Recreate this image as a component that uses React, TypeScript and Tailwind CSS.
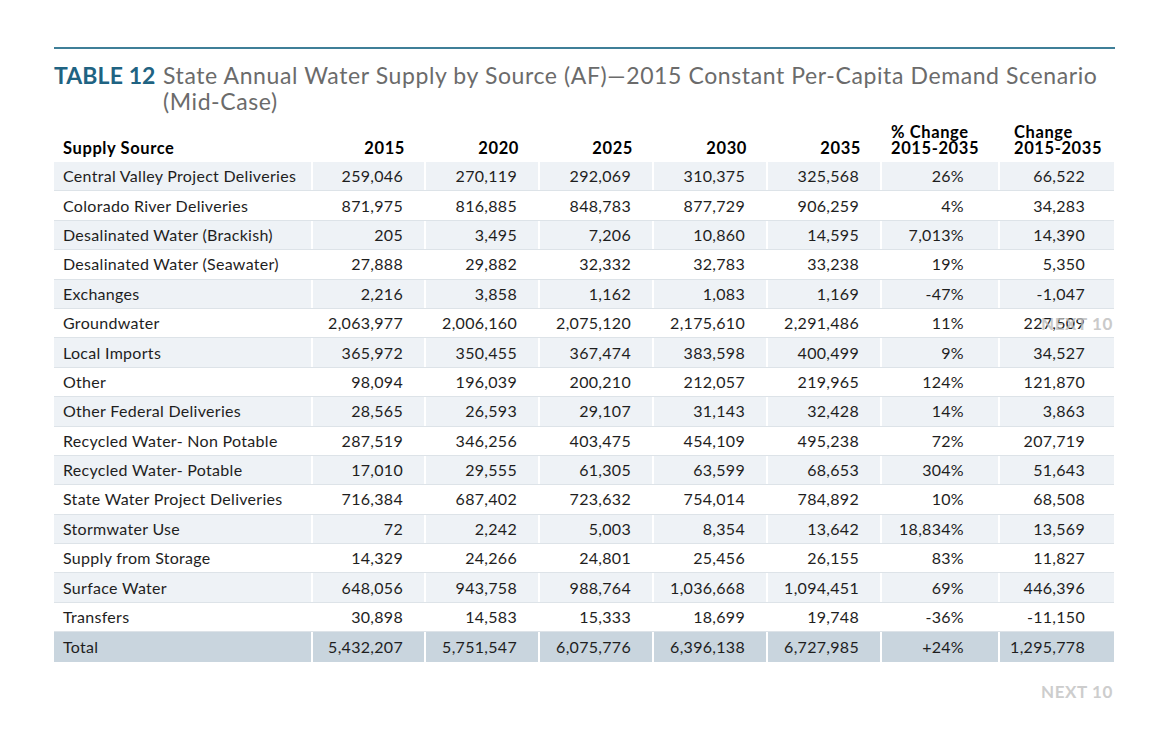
import React from 'react';

const rows: [string, string, string, string, string, string, string, string][] = [
  ['Central Valley Project Deliveries', '259,046', '270,119', '292,069', '310,375', '325,568', '26%', '66,522'],
  ['Colorado River Deliveries', '871,975', '816,885', '848,783', '877,729', '906,259', '4%', '34,283'],
  ['Desalinated Water (Brackish)', '205', '3,495', '7,206', '10,860', '14,595', '7,013%', '14,390'],
  ['Desalinated Water (Seawater)', '27,888', '29,882', '32,332', '32,783', '33,238', '19%', '5,350'],
  ['Exchanges', '2,216', '3,858', '1,162', '1,083', '1,169', '-47%', '-1,047'],
  ['Groundwater', '2,063,977', '2,006,160', '2,075,120', '2,175,610', '2,291,486', '11%', '227,509'],
  ['Local Imports', '365,972', '350,455', '367,474', '383,598', '400,499', '9%', '34,527'],
  ['Other', '98,094', '196,039', '200,210', '212,057', '219,965', '124%', '121,870'],
  ['Other Federal Deliveries', '28,565', '26,593', '29,107', '31,143', '32,428', '14%', '3,863'],
  ['Recycled Water- Non Potable', '287,519', '346,256', '403,475', '454,109', '495,238', '72%', '207,719'],
  ['Recycled Water- Potable', '17,010', '29,555', '61,305', '63,599', '68,653', '304%', '51,643'],
  ['State Water Project Deliveries', '716,384', '687,402', '723,632', '754,014', '784,892', '10%', '68,508'],
  ['Stormwater Use', '72', '2,242', '5,003', '8,354', '13,642', '18,834%', '13,569'],
  ['Supply from Storage', '14,329', '24,266', '24,801', '25,456', '26,155', '83%', '11,827'],
  ['Surface Water', '648,056', '943,758', '988,764', '1,036,668', '1,094,451', '69%', '446,396'],
  ['Transfers', '30,898', '14,583', '15,333', '18,699', '19,748', '-36%', '-11,150'],
];

const total = ['Total', '5,432,207', '5,751,547', '6,075,776', '6,396,138', '6,727,985', '+24%', '1,295,778'];

// column widths and padding for each cell
const cols = ['w-[259px]', 'w-[113px]', 'w-[114px]', 'w-[114px]', 'w-[114px]', 'w-[114px]', 'w-[118px]', 'w-[114px]'];
const pads = ['pl-[9px]', 'pr-[21px]', 'pr-[21px]', 'pr-[21px]', 'pr-[21px]', 'pr-[21px]', 'pr-[34px]', 'pr-[29px]'];

const Row = ({ cells, bg, last }: { cells: string[]; bg: string; last?: boolean }) => (
  <div className={`flex h-[29.4px] ${bg} ${last ? '' : 'border-b border-[#dde3e8]'}`}>
    {cells.map((c, i) => (
      <div
        key={i}
        className={`${cols[i]} ${pads[i]} flex items-center whitespace-nowrap ${i === 0 ? 'justify-start' : 'justify-end'} ${
          i < cells.length - 1 ? 'border-r-2 border-white' : ''
        }`}
      >
        {c}
      </div>
    ))}
  </div>
);

export default function App() {
  return (
    <div className="w-[1167px] h-[744px] bg-white relative" style={{ fontFamily: 'Lato, "Noto Sans", sans-serif' }}>
      <div className="pt-[47px] px-[54px]">
        <div className="h-[2px] bg-[#3f7f98] w-[1061px]" />

        <div className="flex mt-[13px] text-[23px] leading-[26px] tracking-[0.6px]">
          <div className="w-[109px] shrink-0 font-bold text-[#1f6382] tracking-[0.1px]">TABLE 12</div>
          <div className="text-[#6b6b6b] whitespace-nowrap">
            State Annual Water Supply by Source (AF)—2015 Constant Per-Capita Demand Scenario
            <br />
            (Mid-Case)
          </div>
        </div>

        <div className="mt-[5px] w-[1060px] text-[16px] tracking-[0.3px] text-[#1e1e1e]">
          <div className="flex h-[43px] items-end pb-[6px] font-bold text-black text-[16.5px] tracking-[0.6px]">
            <div className="w-[259px] pl-[9px] leading-[16px]">Supply Source</div>
            {['2015', '2020', '2025', '2030', '2035'].map((y, i) => (
              <div key={y} className={`${cols[i + 1]} pr-[21px] text-right leading-[16px]`}>
                {y}
              </div>
            ))}
            <div className="w-[118px] pl-[9px] leading-[16px] whitespace-nowrap">
              % Change
              <br />
              2015-2035
            </div>
            <div className="w-[114px] pl-[14px] leading-[16px] whitespace-nowrap">
              Change
              <br />
              2015-2035
            </div>
          </div>

          {rows.map((r, i) => (
            <Row key={r[0]} cells={r} bg={i % 2 === 0 ? 'bg-[#eef2f6]' : 'bg-white'} />
          ))}
          <Row cells={total} bg="bg-[#c9d5de]" last />
        </div>
      </div>

      {/* scanned watermark bleeding over the table */}
      <div className="absolute left-[1041px] top-[311px] text-[17px] font-bold tracking-[0.6px] text-[#bdbdbd] opacity-80 pointer-events-none">
        NEXT 10
      </div>
      <div className="absolute left-[1041px] top-[679px] text-[17px] font-bold tracking-[0.6px] text-[#cdcdcd]">
        NEXT 10
      </div>
    </div>
  );
}
